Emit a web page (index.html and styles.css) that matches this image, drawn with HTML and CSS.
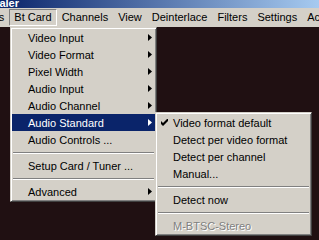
FILE: index.html
```html
<!DOCTYPE html>
<html lang="en">
<head>
    <meta charset="UTF-8">
    <title>DScaler – Bt Card menu</title>
    <link rel="stylesheet" href="styles.css">
</head>
<body>
    <div class="window">
        <div class="titlebar"><span class="title">DScaler</span></div>

        <div class="menubar">
            <span class="mb-item first">Sources</span>
            <span class="mb-item open">Bt Card</span>
            <span class="mb-item">Channels</span>
            <span class="mb-item">View</span>
            <span class="mb-item">Deinterlace</span>
            <span class="mb-item">Filters</span>
            <span class="mb-item">Settings</span>
            <span class="mb-item">Actions</span>
        </div>

        <div class="desk"></div>

        <!-- Bt Card dropdown -->
        <div class="menu main-menu">
            <div class="item"><span class="gutter"></span>Video Input<svg class="arrow" width="4" height="7" viewBox="0 0 4 7"><polygon points="0,0 4,3.5 0,7"/></svg></div>
            <div class="item"><span class="gutter"></span>Video Format<svg class="arrow" width="4" height="7" viewBox="0 0 4 7"><polygon points="0,0 4,3.5 0,7"/></svg></div>
            <div class="item"><span class="gutter"></span>Pixel Width<svg class="arrow" width="4" height="7" viewBox="0 0 4 7"><polygon points="0,0 4,3.5 0,7"/></svg></div>
            <div class="item"><span class="gutter"></span>Audio Input<svg class="arrow" width="4" height="7" viewBox="0 0 4 7"><polygon points="0,0 4,3.5 0,7"/></svg></div>
            <div class="item"><span class="gutter"></span>Audio Channel<svg class="arrow" width="4" height="7" viewBox="0 0 4 7"><polygon points="0,0 4,3.5 0,7"/></svg></div>
            <div class="item active"><span class="gutter"></span>Audio Standard<svg class="arrow" width="4" height="7" viewBox="0 0 4 7"><polygon points="0,0 4,3.5 0,7"/></svg></div>
            <div class="item"><span class="gutter"></span>Audio Controls ...</div>
            <div class="sep"></div>
            <div class="item"><span class="gutter"></span>Setup Card / Tuner ...</div>
            <div class="sep"></div>
            <div class="item"><span class="gutter"></span>Advanced<svg class="arrow" width="4" height="7" viewBox="0 0 4 7"><polygon points="0,0 4,3.5 0,7"/></svg></div>
        </div>

        <!-- Audio Standard submenu -->
        <div class="menu sub-menu">
            <div class="item"><span class="gutter"><svg class="check" width="7" height="7" viewBox="0 0 7 7"><polygon points="0,2 2,4 6,0 7,0 7,2 2,7 0,5"/></svg></span>Video format default</div>
            <div class="item"><span class="gutter"></span>Detect per video format</div>
            <div class="item"><span class="gutter"></span>Detect per channel</div>
            <div class="item"><span class="gutter"></span>Manual...</div>
            <div class="sep"></div>
            <div class="item"><span class="gutter"></span>Detect now</div>
            <div class="sep"></div>
            <div class="item disabled"><span class="gutter"></span>M-BTSC-Stereo</div>
        </div>
    </div>
</body>
</html>
```

FILE: styles.css
```css
body {
    margin: 0;
    font-family: "Liberation Sans", Arial, sans-serif;
    font-size: 11px;
    color: #000;
}

.window {
    position: relative;
    width: 319px;
    height: 240px;
    display: flex;
    flex-direction: column;
    overflow: hidden;
    background: #201012;
}

.titlebar {
    height: 8px;
    flex: none;
    overflow: hidden;
    background: linear-gradient(to right, #0a246a, #a6caf0);
}

.title {
    display: block;
    color: white;
    font-weight: bold;
    line-height: 11px;
    margin: -2px 0 0 -22px;
}

.menubar {
    height: 19px;
    flex: none;
    display: flex;
    align-items: flex-start;
    white-space: nowrap;
    background: #d4d0c8;
}

.mb-item {
    margin-top: 1px;
    height: 15px;
    line-height: 15px;
    padding: 0 4px;
    border: 1px solid transparent;
}

.mb-item.first {
    margin-left: -41px;
}

.mb-item.open {
    border-color: #808080 #fff #fff #808080;
}

.desk {
    flex: 1;
}

/* popup menus */
.menu {
    position: absolute;
    padding: 1px;
    background: #d4d0c8;
    border: 1px solid;
    border-color: #d4d0c8 #404040 #404040 #d4d0c8;
    box-shadow: inset 1px 1px #fff, inset -1px -1px #808080;
    white-space: nowrap;
}

.main-menu {
    left: 10px;
    top: 27px;
    width: 143px;
}

.sub-menu {
    left: 155px;
    top: 112px;
    width: 153px;
}

.item {
    display: flex;
    align-items: center;
    height: 17px;
    padding-right: 3px;
}

.item.active {
    background: #0a246a;
    color: white;
}

.gutter {
    width: 16px;
    flex: none;
    display: flex;
    align-items: center;
}

.check {
    margin-left: 4px;
}

.arrow {
    margin-left: auto;
    fill: currentColor;
}

.sep {
    height: 9px;
    padding-top: 4px;
    box-sizing: border-box;
}

.sep::before {
    content: "";
    display: block;
    margin: 0 1px;
    border-top: 1px solid #808080;
    border-bottom: 1px solid #fff;
}

.disabled {
    color: #808080;
    text-shadow: 1px 1px 0 #fff;
}
```
